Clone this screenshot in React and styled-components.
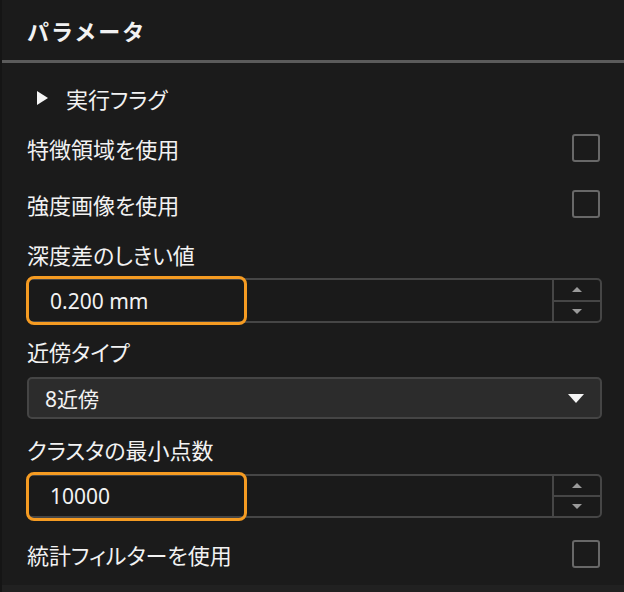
import React from 'react'
import styled, { createGlobalStyle } from 'styled-components'

const Global = createGlobalStyle`
  html, body {
    margin: 0;
    padding: 0;
    background: #1b1b1b;
  }
  body {
    font-family: "Noto Sans", "Noto Sans CJK JP", sans-serif;
    color: #f2f2f2;
  }
`

const Panel = styled.div`
  width: 624px;
  height: 592px;
  display: flex;
  flex-direction: column;
  background: #1b1b1b;
  border-left: 2px solid #151515;
  box-sizing: border-box;
  overflow: hidden;
`

const Header = styled.div`
  height: 60px;
  display: flex;
  align-items: center;
  padding-left: 25px;
  font-size: 22px;
  font-weight: 700;
  letter-spacing: 2px;
  border-bottom: 3px solid #5b5b5b;
`

const Body = styled.div`
  flex: 1;
  padding: 0 22px 0 25px;
  display: flex;
  flex-direction: column;
  font-feature-settings: "palt";
`

const ExpanderRow = styled.div`
  height: 57px;
  box-sizing: border-box;
  padding-top: 13px;
  display: flex;
  align-items: center;
  gap: 18px;
  font-size: 22px;
  padding-left: 10px;
`

const Caret = styled.span`
  width: 0;
  height: 0;
  border-top: 7px solid transparent;
  border-bottom: 7px solid transparent;
  border-left: 11px solid #f5f5f5;
`

const CheckRow = styled.div`
  height: 56px;
  margin-top: ${p => p.$top || 0}px;
  display: flex;
  align-items: center;
  justify-content: space-between;
  font-size: 22px;
`

const Box = styled.span`
  width: 24px;
  height: 24px;
  border: 2px solid #686868;
  border-radius: 3px;
  margin-right: 2px;
`

const Field = styled.div`
  margin-top: ${p => p.$top}px;
  display: flex;
  flex-direction: column;
`

const Label = styled.div`
  height: 30px;
  line-height: 30px;
  font-size: 22px;
`

const Spin = styled.div`
  position: relative;
  margin-top: ${p => p.$gap}px;
  height: ${p => p.$h}px;
  display: flex;
  border: 2px solid #464646;
  border-radius: 5px;
  background: #1a1a1a;
  box-sizing: border-box;
`

const SpinText = styled.div`
  flex: 1;
  display: flex;
  align-items: center;
  padding-left: 21px;
  font-size: 21px;
`

const SpinButtons = styled.div`
  width: 46px;
  display: flex;
  flex-direction: column;
  border-left: 2px solid #464646;
`

const SpinButton = styled.div`
  flex: 1;
  display: flex;
  align-items: center;
  justify-content: center;
  & + & {
    border-top: 2px solid #464646;
  }
`

const Arrow = styled.span`
  width: 0;
  height: 0;
  border-left: 5px solid transparent;
  border-right: 5px solid transparent;
  ${p => (p.$up ? 'border-bottom' : 'border-top')}: 5px solid #9a9a9a;
`

const Highlight = styled.div`
  position: absolute;
  left: -3px;
  top: -4px;
  width: 221px;
  height: 49px;
  border: 3px solid #f59b22;
  border-radius: 8px;
  box-sizing: border-box;
  pointer-events: none;
`

const Combo = styled.div`
  margin-top: ${p => p.$gap}px;
  height: 42px;
  display: flex;
  align-items: center;
  justify-content: space-between;
  padding: 0 16px 0 16px;
  background: #2c2c2c;
  border: 2px solid #454545;
  border-radius: 5px;
  box-sizing: border-box;
  font-size: 21px;
`

const ComboArrow = styled.span`
  width: 0;
  height: 0;
  border-left: 8px solid transparent;
  border-right: 8px solid transparent;
  border-top: 9px solid #f5f5f5;
`

const Footer = styled.div`
  height: 7px;
  background: #212121;
`

const SpinBox = ({ value, gap, h }) => (
  <Spin $gap={gap} $h={h}>
    <SpinText>{value}</SpinText>
    <SpinButtons>
      <SpinButton><Arrow $up /></SpinButton>
      <SpinButton><Arrow /></SpinButton>
    </SpinButtons>
    <Highlight />
  </Spin>
)

export default function App () {
  return (
    <Panel>
      <Global />
      <Header>パラメータ</Header>
      <Body>
        <ExpanderRow>
          <Caret />
          <span>実行フラグ</span>
        </ExpanderRow>
        <CheckRow>
          <span>特徴領域を使用</span>
          <Box />
        </CheckRow>
        <CheckRow>
          <span>強度画像を使用</span>
          <Box />
        </CheckRow>
        <Field $top={8}>
          <Label>深度差のしきい値</Label>
          <SpinBox value='0.200 mm' gap={8} h={45} />
        </Field>
        <Field $top={14}>
          <Label>近傍タイプ</Label>
          <Combo $gap={10}>
            <span>8近傍</span>
            <ComboArrow />
          </Combo>
        </Field>
        <Field $top={16}>
          <Label>クラスタの最小点数</Label>
          <SpinBox value='10000' gap={9} h={44} />
        </Field>
        <CheckRow $top={8}>
          <span>統計フィルターを使用</span>
          <Box />
        </CheckRow>
      </Body>
      <Footer />
    </Panel>
  )
}
